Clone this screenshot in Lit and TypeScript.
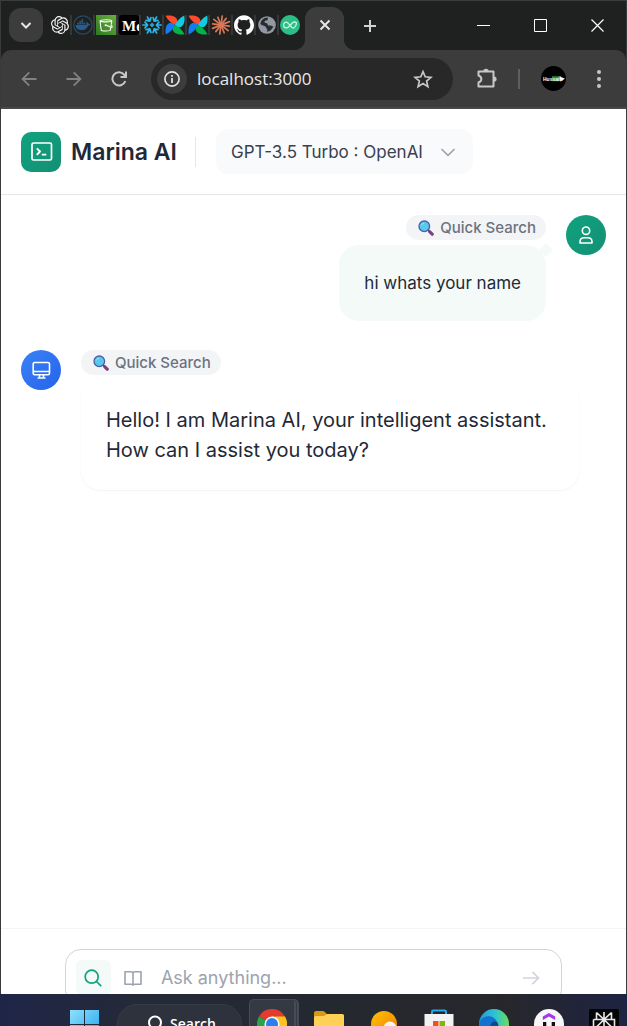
import { LitElement, html, css, svg } from "lit";
import { customElement, property } from "lit/decorators.js";

const favicons = [
  {
    name: "ChatGPT",
    art: svg`<path transform="translate(1 1) scale(.75)" fill="#f2f2f2" d="M22.2819 9.8211a5.9847 5.9847 0 0 0-.5157-4.9108 6.0462 6.0462 0 0 0-6.5098-2.9A6.0651 6.0651 0 0 0 4.9807 4.1818a5.9847 5.9847 0 0 0-3.9977 2.9 6.0462 6.0462 0 0 0 .7427 7.0966 5.98 5.98 0 0 0 .511 4.9107 6.051 6.051 0 0 0 6.5146 2.9001A5.9847 5.9847 0 0 0 13.2599 24a6.0557 6.0557 0 0 0 5.7718-4.2058 5.9894 5.9894 0 0 0 3.9977-2.9001 6.0557 6.0557 0 0 0-.7475-7.0729zm-9.022 12.6081a4.4755 4.4755 0 0 1-2.8764-1.0408l.1419-.0804 4.7783-2.7582a.7948.7948 0 0 0 .3927-.6813v-6.7369l2.02 1.1686a.071.071 0 0 1 .038.052v5.5826a4.504 4.504 0 0 1-4.4945 4.4944zm-9.6607-4.1254a4.4708 4.4708 0 0 1-.5346-3.0137l.142.0852 4.783 2.7582a.7712.7712 0 0 0 .7806 0l5.8428-3.3685v2.3324a.0804.0804 0 0 1-.0332.0615L9.74 19.9502a4.4992 4.4992 0 0 1-6.1408-1.6464zM2.3408 7.8956a4.485 4.485 0 0 1 2.3655-1.9728V11.6a.7664.7664 0 0 0 .3879.6765l5.8144 3.3543-2.0201 1.1685a.0757.0757 0 0 1-.071 0l-4.8303-2.7865A4.504 4.504 0 0 1 2.3408 7.872zm16.5963 3.8558L13.1038 8.364 15.1192 7.2a.0757.0757 0 0 1 .071 0l4.8303 2.7913a4.4944 4.4944 0 0 1-.6765 8.1042v-5.6772a.79.79 0 0 0-.407-.667zm2.0107-3.0231l-.142-.0852-4.7735-2.7818a.7759.7759 0 0 0-.7854 0L9.409 9.2297V6.8974a.0662.0662 0 0 1 .0284-.0615l4.8303-2.7866a4.4992 4.4992 0 0 1 6.6802 4.66zM8.3065 12.863l-2.02-1.1638a.0804.0804 0 0 1-.038-.0567V6.0742a4.4992 4.4992 0 0 1 7.3757-3.4537l-.142.0805L8.704 5.459a.7948.7948 0 0 0-.3927.6813zm1.0976-2.3654l2.602-1.4998 2.6069 1.4998v2.9994l-2.5974 1.4997-2.6067-1.4997Z"/>`,
  },
  {
    name: "Docker",
    art: svg`<circle cx="10" cy="10" r="9.2" fill="none" stroke="#274a66" stroke-width="1.2"/>
      <path fill="#275d8c" d="M2.6 10h10.6c.5-.9.4-1.9.1-2.6l.7-.6c.8.5 1.2 1.200 1.300 2 .8-.1 1.500 0 2 .4-.4.9-1.200 1.300-2.200 1.300-1 3.200-3.300 4.700-6.600 4.700C5 15.200 2.700 13.500 2.600 10zM4 7.800h1.800v1.600H4zM6.200 7.800H8v1.600H6.200zM8.400 7.800h1.800v1.600H8.400zM10.600 7.800h1.700v1.600h-1.700zM6.200 6H8v1.500H6.200zM8.400 6h1.800v1.500H8.400zM8.400 4.200h1.800v1.500H8.400z"/>`,
  },
  {
    name: "Object storage",
    art: svg`<defs><linearGradient id="s3" x1="0" y1="1" x2="1" y2="0"><stop stop-color="#2a7a1f"/><stop offset="1" stop-color="#6cae3e"/></linearGradient></defs>
      <path fill="url(#s3)" d="M0 0h20v20H0z"/>
      <path fill="none" stroke="#fff" stroke-width="1.100" d="M4 5.800 5.200 15c0 1.300 9 1.300 9.200 0l.4-3.200M4 5.800c0-1.500 11.800-1.500 11.800 0 0 1.400-11.800 1.400-11.800 0zM15.800 5.800l-.5 3.500M9.500 10l5 2c2.300.6 2.300-.8 0-2.200"/><circle cx="9.600" cy="10.200" r="1" fill="#fff"/>`,
  },
  {
    name: "Medium",
    art: svg`<rect width="20" height="20" rx="3" fill="#000"/><text x="3" y="15.500" font-family="Liberation Serif, serif" font-weight="700" font-size="15" fill="#fff">Me</text>`,
  },
  {
    name: "Snowflake",
    art: svg`<g fill="none" stroke="#2bb5e8" stroke-width="1.700" stroke-linecap="round" stroke-linejoin="round">
      ${[30, 90, 150, 210, 270, 330].map((a) => svg`<path transform="rotate(${a} 10 10)" d="M10 .8V5M7.200 3 10 5.600 12.800 3"/>`)}</g>
      <path fill="none" stroke="#2bb5e8" stroke-width="1.200" d="m10 8.500 1.500 1.500-1.500 1.500L8.500 10z"/>`,
  },
  { name: "Airflow", art: pinwheel() },
  { name: "Airflow", art: pinwheel() },
  {
    name: "Claude",
    art: svg`<g stroke="#d97757" stroke-width="1.700" stroke-linecap="round">
      ${[0, 30, 60, 90, 120, 150, 180, 210, 240, 270, 300, 330].map((a, i) => svg`<path transform="rotate(${a + 8} 10 10)" d="M10 9V${i % 2 ? 1.6 : 0.9}"/>`)}</g>`,
  },
  {
    name: "GitHub",
    art: svg`<path transform="scale(.8333)" fill="#fff" d="M12 .297c-6.63 0-12 5.373-12 12 0 5.303 3.438 9.800 8.205 11.385.6.113.82-.258.82-.577 0-.285-.01-1.040-.015-2.040-3.338.724-4.042-1.610-4.042-1.610C4.422 18.070 3.633 17.700 3.633 17.700c-1.087-.744.084-.729.084-.729 1.205.084 1.838 1.236 1.838 1.236 1.070 1.835 2.809 1.305 3.495.998.108-.776.417-1.305.76-1.605-2.665-.3-5.466-1.332-5.466-5.930 0-1.310.465-2.380 1.235-3.220-.135-.303-.54-1.523.105-3.176 0 0 1.005-.322 3.300 1.230.96-.267 1.980-.399 3-.405 1.020.006 2.040.138 3 .405 2.280-1.552 3.285-1.230 3.285-1.230.645 1.653.24 2.873.12 3.176.765.84 1.230 1.910 1.230 3.220 0 4.610-2.805 5.625-5.475 5.920.42.36.81 1.096.81 2.220 0 1.606-.015 2.896-.015 3.286 0 .315.21.69.825.57C20.565 22.092 24 17.592 24 12.297c0-6.627-5.373-12-12-12"/>`,
  },
  {
    name: "Web page",
    art: svg`<circle cx="10" cy="10" r="8.800" fill="#9299a3"/>
      <path fill="#2a2d2f" d="M11 2.600c-.8 1.200.4 1.500-.5 2.400-1 .8-3 .2-3 1.800 0 1.500 1.700 1 2.700 1.600.8.7.2 1.700 1.300 2 1.200.3 2.200-.3 3.300.5.6.5 1 .4 1.600.2-.8 3-3.400 5.600-6.700 5.700 1-1.300.8-2.500-.1-3.200-.7-.6-.4-1.600-1.200-2.200-1.200-.8-3.400-.6-5-2.400C3.800 5.500 6.500 2.300 11 2.600z"/>`,
  },
  {
    name: "Infinity",
    art: svg`<circle cx="10" cy="10" r="10" fill="#2dbd87"/><path fill="none" stroke="#c4f3df" stroke-width="1.300" stroke-linejoin="round" d="M10 10.500C8.700 12 7.800 13 6.300 13c-3.700 0-3.700-5.800 0-5.800 2.700 0 4 5.800 7 5.800 1.600 0 3-2.800 3.200-5.300-1.200-.8-3-.8-4.200.3L10 10.500"/>`,
  },
];

function pinwheel() {
  const blade = "M10 10C6.500 8.500 3 5.500.500.800 6-.3 11.500 1.200 12.300 5.500c.3 1.800-.8 3.500-2.300 4.500z";
  return svg`<path fill="#ff4a2e" d=${blade}/><path fill="#11cbe0" transform="rotate(90 10 10)" d=${blade}/>
    <path fill="#04b24a" transform="rotate(180 10 10)" d=${blade}/><path fill="#127cf0" transform="rotate(270 10 10)" d=${blade}/>`;
}

@customElement("browser-chrome")
class BrowserChrome extends LitElement {
  static styles = css`
    :host { display: block; background: #1f2120; font-family: "Open Sans", sans-serif; }
    button { border: 0; padding: 0; background: none; color: inherit; display: grid; place-items: center; }
    svg { display: block; }
    .strip { display: flex; height: 49px; padding-left: 8px; border-top: 1px solid #3b3d3c; color: #e6e6e6; }
    .list { width: 34px; height: 34px; margin-top: 7px; border-radius: 12px; background: #3c3c3c; }
    .tabs { display: flex; flex: 0 1 auto; gap: 1px; padding: 14px 5px 0 7px; }
    .tab { display: flex; gap: 0; width: 22px; height: 20px; overflow: hidden; justify-content: space-between; }
    .tab svg { flex: none; }
    .tab::after { content: ""; width: 2px; background: #363837; }
    .tab:last-child { width: 20px; }
    .tab:last-child::after { display: none; }
    .active { position: relative; width: 39px; margin-top: 6px; height: 43px; border-radius: 12px 12px 0 0; background: #3c3c3c; }
    .active::before, .active::after { content: ""; position: absolute; bottom: 0; width: 12px; height: 12px; }
    .active::before { right: 100%; background: radial-gradient(circle at 0 0, #1f2120 12px, #3c3c3c 13px); }
    .active::after { left: 100%; background: radial-gradient(circle at 100% 0, #1f2120 12px, #3c3c3c 13px); }
    .active button { width: 39px; height: 36px; }
    .new { width: 52px; height: 49px; }
    .controls { display: flex; margin-left: auto; color: #fff; }
    .controls button { width: 57px; height: 49px; }
    .bar { display: flex; align-items: center; height: 57px; padding: 0 5px; border-radius: 10px 10px 0 0; background: #3c3c3c; color: #c7c7c7; border-bottom: 2px solid #4b4847; }
    .tool { width: 45px; height: 40px; flex: none; }
    .dim { color: #828282; }
    .address { display: flex; flex: 1; align-items: center; min-width: 0; height: 42px; margin: 0 11px 0 10px; padding: 0 8px 0 6px; border-radius: 21px; background: #282828; }
    .info { width: 30px; height: 30px; flex: none; border-radius: 50%; background: #3c3c3c; color: #e3e3e3; }
    .url { flex: 1; min-width: 0; margin-left: 10px; padding: 0; border: 0; outline: 0; background: none; color: #e8e8e8; font: 17px/26px "Open Sans", sans-serif; }
    .star { width: 44px; height: 40px; }
    .rule { width: 2px; height: 20px; margin: 0 21px 0 9px; background: #5f5f5f; }
    .profile { width: 25px; height: 25px; margin-right: 10px; border-radius: 50%; overflow: hidden; }
  `;
  render() {
    return html`
      <div class="strip">
        <button class="list" aria-label="Search tabs"><svg width="14" height="14" viewBox="0 0 14 14" fill="none" stroke="currentColor" stroke-width="2"><path d="m2.500 5 4.500 4.500L11.500 5"/></svg></button>
        <div class="tabs">
          ${favicons.map((f) => html`<div class="tab" title=${f.name}><svg width="20" height="20" viewBox="0 0 20 20">${f.art}</svg></div>`)}
        </div>
        <div class="active"><button aria-label="Close tab"><svg width="12" height="12" viewBox="0 0 12 12" stroke="currentColor" stroke-width="2"><path d="m1.500 1.500 9 9m0-9-9 9"/></svg></button></div>
        <button class="new" aria-label="New tab"><svg width="14" height="14" viewBox="0 0 14 14" stroke="#d2d2d2" stroke-width="2"><path d="M7 1v12M1 7h12"/></svg></button>
        <div class="controls">
          <button aria-label="Minimise"><svg width="13" height="13" viewBox="0 0 13 13" stroke="currentColor"><path d="M0 6.500h13"/></svg></button>
          <button aria-label="Maximise"><svg width="13" height="13" viewBox="0 0 13 13" fill="none" stroke="currentColor"><path d="M.5.5h12v12H.5z"/></svg></button>
          <button aria-label="Close window"><svg width="13" height="13" viewBox="0 0 13 13" stroke="currentColor" stroke-width="1.200"><path d="m.5.5 12 12m0-12-12 12"/></svg></button>
        </div>
      </div>
      <div class="bar">
        <button class="tool dim" aria-label="Back"><svg width="16" height="16" viewBox="0 0 16 16" fill="none" stroke="currentColor" stroke-width="1.800"><path d="M15.500 8H2M8.300 1.300 1.600 8l6.700 6.700"/></svg></button>
        <button class="tool dim" aria-label="Forward"><svg width="16" height="16" viewBox="0 0 16 16" fill="none" stroke="currentColor" stroke-width="1.800"><path d="M.5 8H14M7.700 1.300 14.400 8l-6.700 6.700"/></svg></button>
        <button class="tool" aria-label="Reload"><svg width="16" height="16" viewBox="0 0 16 16" fill="none" stroke="currentColor" stroke-width="2"><path d="M14.300 10A6.600 6.600 0 1 1 13 3.500L14.800 5.600M15 .5v5.500H9.500"/></svg></button>
        <div class="address">
          <button class="info" aria-label="Site information"><svg width="16" height="16" viewBox="0 0 16 16"><circle cx="8" cy="8" r="7.100" fill="none" stroke="currentColor" stroke-width="1.700"/><path fill="currentColor" d="M7.100 7h1.800v5H7.100zM7.100 4h1.800v1.800H7.100z"/></svg></button>
          <input class="url" aria-label="Address" value="localhost:3000" />
          <button class="star" aria-label="Bookmark"><svg width="20" height="20" viewBox="0 0 20 20" fill="none" stroke="currentColor" stroke-width="1.700"><path d="m10 2.600 2.200 5.200 5.700.5-4.300 3.700 1.300 5.600-4.900-3-4.900 3 1.300-5.600L2.100 8.300l5.700-.5z"/></svg></button>
        </div>
        <button class="tool" aria-label="Extensions"><svg width="22" height="22" viewBox="0 0 22 22"><path fill="none" stroke="currentColor" stroke-width="2" stroke-linejoin="round" d="M2.500 3.500h15v15h-15v-4c3.800-1.200 3.800-5.800 0-7z"/><path fill="currentColor" d="M7.300 3.500a2.700 2.700 0 0 1 5.400 0zM18 8.500a2.600 2.600 0 0 1 0 5.200z"/></svg></button>
        <span class="rule"></span>
        <button class="profile" aria-label="Profile"><svg width="25" height="25" viewBox="0 0 25 25"><path d="M0 0h25v25H0z"/><path fill="#2c8a3a" d="M11 10.200h9v5h-9z"/><path fill="#f2f2f2" d="m18.500 10.200 5.500 2.500-4.500 2.800z"/><text x="2" y="14.800" font-family="Liberation Sans, sans-serif" font-weight="700" font-size="5" fill="#fff">Hussain</text></svg></button>
        <button class="tool" aria-label="Menu"><svg width="4" height="20" viewBox="0 0 4 20" fill="currentColor"><circle cx="2" cy="3" r="2"/><circle cx="2" cy="10" r="2"/><circle cx="2" cy="17" r="2"/></svg></button>
      </div>`;
  }
}

@customElement("chat-message")
class ChatMessage extends LitElement {
  @property() from = "user";
  @property() text = "";
  static styles = css`
    :host { display: block; }
    .row { display: flex; gap: 20px; align-items: flex-start; }
    .row.user { flex-direction: row-reverse; }
    .avatar { flex: none; width: 40px; height: 40px; border-radius: 50%; background: linear-gradient(135deg, #10a37f, #148f74); }
    .assistant .avatar { background: linear-gradient(135deg, #3b82f6, #2563eb); }
    .body { display: flex; flex-direction: column; align-items: flex-start; gap: 5px; min-width: 0; max-width: 498px; }
    .user .body { align-items: flex-end; }
    .chip { display: flex; align-items: center; gap: 6px; height: 25px; padding: 0 10px 0 12px; border-radius: 13px; background: #f3f4f6; color: #6b7280; font-size: 15px; font-weight: 500; line-height: 25px; }
    .bubble { position: relative; margin: 0; padding: 25px; border-radius: 20px; color: #1f2937; overflow-wrap: anywhere; }
    .user .bubble { background: #f3faf8; font-size: 17px; line-height: 26px; }
    .user .bubble::after { content: ""; position: absolute; top: 0; right: -5px; width: 10px; height: 10px; background: #f3faf8; transform: rotate(45deg); }
    .assistant .bubble { font-size: 20px; line-height: 30px; background: #fff; box-shadow: 0 1px 2px rgba(0, 0, 0, 0.05); }
    svg { display: block; flex: none; }
  `;
  render() {
    const user = this.from === "user";
    return html`<article class="row ${this.from}">
      <div class="avatar">
        <svg width="40" height="40" viewBox="0 0 40 40" fill="none" stroke="#fff" stroke-width="1.600" stroke-linejoin="round">
          ${user
            ? svg`<circle cx="20" cy="15.700" r="3.700"/><path d="M14 28v-1c0-2.500 1.800-4.200 4.200-4.200h3.600c2.400 0 4.200 1.700 4.200 4.200v1z"/>`
            : svg`<rect x="12.200" y="12.500" width="16.300" height="12.200" rx="1.500"/><path d="M12.200 21.500h16.300M18.500 25v2.700M22.500 25v2.700M16.500 28h8"/>`}
        </svg>
      </div>
      <div class="body">
        <div class="chip">
          <svg width="16" height="16" viewBox="0 0 16 16"><path stroke="#7e3f83" stroke-width="3.200" stroke-linecap="round" d="m11.800 11.800 2.400 2.400"/><path stroke="#4d3d72" stroke-width="1.500" d="m9.500 9.500 2 2"/><circle cx="6.300" cy="6.300" r="5.300" fill="#5ac8ec" stroke="#4a5fa5" stroke-width="1.300"/><path fill="none" stroke="#a8e6fa" stroke-linecap="round" d="M3.500 5c.5-1 1-1.400 2-1.700"/></svg>
          <span>Quick Search</span>
        </div>
        <p class="bubble">${this.text}</p>
      </div>
    </article>`;
  }
}

@customElement("marina-chat")
class MarinaChat extends LitElement {
  static styles = css`
    :host { display: flex; flex-direction: column; background: #fff; color: #1f2937; font-family: Inter, sans-serif; }
    svg { display: block; flex: none; }
    button { display: grid; place-items: center; padding: 0; border: 0; background: none; }
    .head { display: flex; align-items: center; padding: 20px; border-bottom: 1px solid #e5e7eb; }
    .logo { width: 40px; height: 40px; border-radius: 10px; background: linear-gradient(135deg, #10a37f, #148f74); }
    .name { margin: 0 18px 0 10px; font-size: 23px; font-weight: 600; line-height: 32px; white-space: nowrap; }
    .split { width: 1px; height: 30px; margin-right: 20px; background: #e5e7eb; }
    .model { position: relative; display: flex; align-items: center; }
    .model select { appearance: none; height: 45px; margin: 0; padding: 0 50px 0 15px; border: 0; border-radius: 12px; background: #f9fafb; color: #374151; font: 17px/26px Inter, sans-serif; }
    .model svg { position: absolute; right: 17px; pointer-events: none; }
    .thread { display: flex; flex: 1; flex-direction: column; gap: 29px; min-height: 0; padding: 20px; overflow: hidden; }
    .foot { padding: 20px; border-top: 1px solid #f3f4f6; }
    .composer { display: flex; align-items: center; gap: 5px; width: 85%; margin: 0 auto; padding: 10px; box-sizing: border-box; border: 1px solid #d1d5db; border-radius: 16px; }
    .mode { flex: none; width: 35px; height: 35px; border-radius: 6px; color: #9ca3af; }
    .mode.on { background: #f3faf8; color: #10a37f; }
    .ask { flex: 1; min-width: 0; margin: 0 0 0 5px; padding: 0; border: 0; outline: 0; background: none; color: #1f2937; font: 18px/26px Inter, sans-serif; }
    .ask::placeholder { color: #9ca3af; opacity: 1; }
    .send { flex: none; width: 40px; height: 35px; color: #d1d5db; }
  `;
  render() {
    return html`
      <header class="head">
        <div class="logo"><svg width="40" height="40" viewBox="0 0 40 40" fill="none" stroke="#fff" stroke-width="1.700" stroke-linejoin="round"><rect x="11" y="11" width="19.500" height="17" rx="1.500"/><path stroke-width="1.900" d="m15.800 16.300 3.200 3.200-3.200 3.300M20.800 22.600h4.500"/></svg></div>
        <h1 class="name">Marina AI</h1>
        <span class="split"></span>
        <div class="model">
          <select aria-label="Model"><option>GPT-3.5 Turbo : OpenAI</option></select>
          <svg width="16" height="16" viewBox="0 0 16 16" fill="none" stroke="#9ca3af" stroke-width="1.600"><path d="m1.500 5 6.500 6.300L14.500 5"/></svg>
        </div>
      </header>
      <main class="thread">
        <chat-message from="user" text="hi whats your name"></chat-message>
        <chat-message from="assistant" text="Hello! I am Marina AI, your intelligent assistant. How can I assist you today?"></chat-message>
      </main>
      <footer class="foot">
        <form class="composer" @submit=${(e: Event) => e.preventDefault()}>
          <button type="button" class="mode on" aria-label="Quick search"><svg width="18" height="18" viewBox="0 0 18 18" fill="none" stroke="currentColor" stroke-width="1.700"><circle cx="7.700" cy="7.700" r="6.500"/><path d="m12.500 12.500 4.700 4.700"/></svg></button>
          <button type="button" class="mode" aria-label="Research"><svg width="18" height="18" viewBox="0 0 18 18" fill="none" stroke="currentColor" stroke-width="1.600" stroke-linejoin="round"><path d="M9 16.200V4.500C9 3.300 8.200 2.700 7 2.700H1v12.500h6.300c1 0 1.700.4 1.700 1 0-.6.7-1 1.700-1H17V2.700h-6c-1.200 0-2 .6-2 1.800"/></svg></button>
          <input class="ask" aria-label="Message" placeholder="Ask anything..." />
          <button class="send" aria-label="Send"><svg width="18" height="16" viewBox="0 0 18 16" fill="none" stroke="currentColor" stroke-width="1.700"><path d="M1 8h15.500M10.300 1.800 16.500 8l-6.200 6.200"/></svg></button>
        </form>
      </footer>`;
  }
}

const apps = [
  {
    name: "File Explorer",
    art: svg`<path fill="#d79a12" d="M0 4c0-1 .6-2 2-2h7c2 0 2.500 2.500 4 3h15c1.500 0 2 1 2 2v14H0z"/><path fill="#ffd056" d="M0 9c0-1 .6-2 2-2h8l3-2h15c1.500 0 2 1 2 2v20H0z"/>`,
  },
  {
    name: "Weather",
    art: svg`<defs><linearGradient id="sun" x1="0" y1="0" x2="1" y2="1"><stop stop-color="#ffc400"/><stop offset="1" stop-color="#f07a05"/></linearGradient></defs><circle cx="15" cy="15" r="13" fill="url(#sun)"/><circle cx="21" cy="19" r="6.500" fill="#f4f4f4"/>`,
  },
  {
    name: "Microsoft Store",
    art: svg`<path fill="none" stroke="#27a8ea" stroke-width="2" d="M8 7V2.800c0-1 .5-1.300 1.200-1.300h11.600c.7 0 1.200.3 1.200 1.300V7"/><path fill="#f3f3f3" d="M.5 5h29v22H.5z"/><path fill="#f25022" d="M9 12h5.500v5.500H9z"/><path fill="#7fba00" d="M15.500 12H21v5.500h-5.500z"/>`,
  },
  {
    name: "Microsoft Edge",
    art: svg`<defs><linearGradient id="edge"><stop stop-color="#1f9be0"/><stop offset=".55" stop-color="#2fc4d0"/><stop offset="1" stop-color="#6bdc5a"/></linearGradient></defs><circle cx="15" cy="15" r="15" fill="url(#edge)"/><path fill="#1173cf" d="M.3 14C2.500 7 11 5.500 15.500 9.500c2.500 2 3 4.500 2.800 6.500-1.500-2.500-6-2.500-6.800 3L9 29C3 26.500-.5 20 .3 14z"/><path fill="#114a8b" d="M11.200 20c-.5-4 1.300-7.500 4.800-7.500 2 0 3.500 1.500 3.300 4.500v6z"/>`,
  },
  {
    name: "Udemy",
    art: svg`<circle cx="15" cy="15" r="15" fill="#f7f7f7"/><path fill="#a435f0" d="m15 4 6.200 3.600V11L15 7.500 8.800 11V7.600z"/><path fill="#111" d="M9 13h3.300v10H9zM17.700 13H21v10h-3.300z"/>`,
  },
  {
    name: "Perplexity",
    art: svg`<rect width="30" height="30" rx="2" fill="#050505"/><path fill="none" stroke="#e8e8e8" stroke-width="1.600" d="M15 3v24M7.500 3.500 15 10.500l7.500-7M7.500 3.500v7M22.500 3.500v7M4.500 10.500h21v10M4.500 10.500v10M15 10.500l-8 8M15 10.500l8 8"/>`,
  },
];

@customElement("task-bar")
class TaskBar extends LitElement {
  static styles = css`
    :host { display: block; height: 32px; overflow: hidden; background: linear-gradient(90deg, #1f2547 0%, #242a38 22%, #24282f 55%, #27272b 80%, #1e2342 100%); }
    .items { display: flex; align-items: flex-start; padding-left: 69px; color: #fff; }
    button { display: block; padding: 0; border: 0; background: none; color: inherit; }
    svg { display: block; }
    .app { margin-top: 15px; }
    .pinned { display: flex; gap: 25px; margin-left: 15px; }
    .search { display: flex; align-items: center; gap: 7px; box-sizing: border-box; width: 125px; height: 40px; margin: 10px 7px 0 18px; padding: 0 0 0 29px; border: 1px solid #363b48; border-radius: 20px; background: #2e323d; font: 600 14px/20px "Open Sans", sans-serif; }
    .current { display: grid; place-items: start center; box-sizing: border-box; width: 50px; height: 48px; margin-top: 5px; padding: 9px 0 0; border: 1px solid #474b55; border-right: 5px double #474b55; border-radius: 5px; background: #353943; }
  `;
  render() {
    return html`<nav class="items">
      <button class="app" aria-label="Start"><svg width="30" height="30" viewBox="0 0 30 30"><defs><linearGradient id="win" x2="1" y2="1"><stop stop-color="#8fe0fb"/><stop offset="1" stop-color="#1ba5f0"/></linearGradient></defs><path fill="url(#win)" d="M1 1h14v14H1zM16 1h14v14H16zM1 16h14v14H1zM16 16h14v14H16z"/></svg></button>
      <button class="search"><svg width="16" height="18" viewBox="0 0 16 18" fill="none" stroke="currentColor" stroke-width="2"><circle cx="8" cy="7.500" r="6"/><path d="m4 12-3 4"/></svg>Search</button>
      <button class="current" aria-label="Chrome"><svg width="30" height="30" viewBox="0 0 30 30"><path fill="#e33b2e" d="M15 15 2 7.500a15 15 0 0 1 26 0z"/><path fill="#fcc31e" d="M15 15V7.500h13A15 15 0 0 1 15 30z"/><path fill="#2aa14c" d="M2 7.500A15 15 0 0 0 15 30l6-11-6-4z"/><circle cx="15" cy="15" r="7.500" fill="#fff"/><circle cx="15" cy="15" r="6" fill="#2d7ff0"/></svg></button>
      <div class="pinned">
        ${apps.map((a) => html`<button class="app" aria-label=${a.name}><svg width="30" height="30" viewBox="0 0 30 30">${a.art}</svg></button>`)}
      </div>
    </nav>`;
  }
}

@customElement("app-root")
class AppRoot extends LitElement {
  static styles = css`
    :host { display: flex; flex-direction: column; height: 100vh; overflow: hidden; background: #1f2120; }
    .window { display: flex; flex: 1; flex-direction: column; min-height: 0; border: solid #3a3a3c; border-width: 0 1px; }
    .viewport { flex: 1; min-height: 0; overflow: hidden; background: #fff; }
    .page { height: calc(100% + 32px); }
    .dock { flex: none; }
  `;
  render() {
    return html`
      <div class="window">
        <browser-chrome></browser-chrome>
        <div class="viewport"><marina-chat class="page"></marina-chat></div>
      </div>
      <task-bar class="dock"></task-bar>`;
  }
}
